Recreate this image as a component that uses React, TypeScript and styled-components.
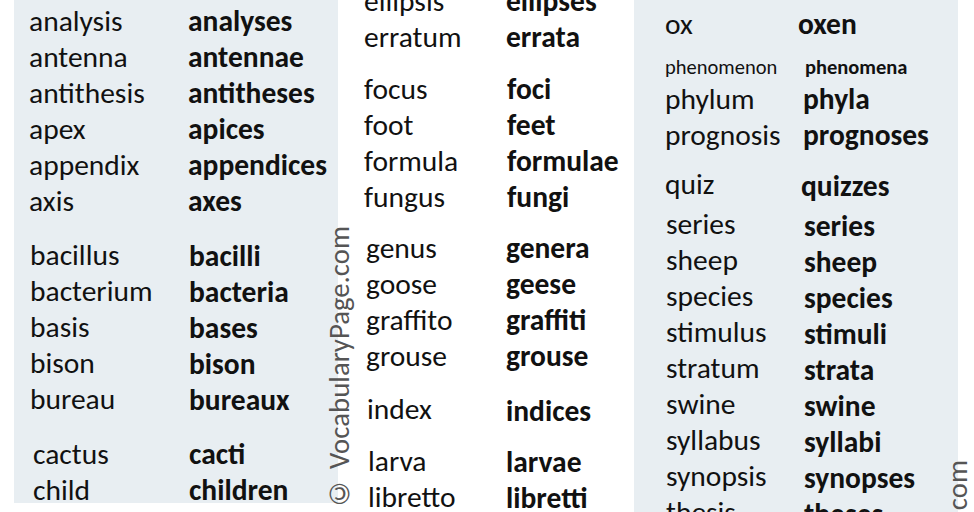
import styled, { createGlobalStyle } from "styled-components";

const GlobalStyle = createGlobalStyle`
    html, body {
        margin: 0;
        padding: 0;
        background: #ffffff;
    }
    body {
        font-family: Carlito, Calibri, Lato, "Liberation Sans", sans-serif;
        color: #111111;
    }
`

const Page = styled.div`
    position: relative;
    width: 974px;
    height: 512px;
    overflow: hidden;
    display: flex;
    background: #ffffff;
`

const Panel = styled.div<{ $width: number; $pad: number; $tint: boolean; $height: number }>`
    width: ${p => p.$width}px;
    height: ${p => p.$height}px;
    flex-shrink: 0;
    padding-left: ${p => p.$pad}px;
    box-sizing: border-box;
    background: ${p => (p.$tint ? "#e8eef2" : "#ffffff")};
    display: flex;
    flex-direction: column;
`

const Gutter = styled.div<{ $width: number }>`
    width: ${p => p.$width}px;
    flex-shrink: 0;
`

const Group = styled.div<{ $top: number; $indent: number }>`
    margin-top: ${p => p.$top}px;
    padding-left: ${p => p.$indent}px;
    display: flex;
    flex-direction: column;
`

const Row = styled.div<{ $col: number; $small: boolean }>`
    display: grid;
    grid-template-columns: ${p => p.$col}px auto;
    height: ${p => (p.$small ? 28 : 36)}px;
    line-height: ${p => (p.$small ? 28 : 36)}px;
    font-size: ${p => (p.$small ? 20.5 : 29.5)}px;
    white-space: nowrap;
`

const Singular = styled.span`
    font-weight: 400;
`

const Plural = styled.span<{ $shift: number; $drop: number }>`
    font-weight: 700;
    padding-left: ${p => p.$shift}px;
    padding-top: ${p => p.$drop}px;
`

const Watermark = styled.div<{ $left: number; $top: number }>`
    position: absolute;
    left: ${p => p.$left}px;
    top: ${p => p.$top}px;
    writing-mode: vertical-rl;
    transform: rotate(180deg);
    font-size: 28.8px;
    line-height: 30px;
    color: #555555;
    white-space: nowrap;
`

interface IGroup {
    top: number
    indent?: number
    shift?: number
    drop?: number
    small?: boolean
    rows: [string, string][]
}

interface IColumn {
    width: number
    pad: number
    col: number
    tint: boolean
    height: number
    groups: IGroup[]
}

const columns: IColumn[] = [
    {
        width: 324, pad: 15, col: 159, tint: true, height: 503,
        groups: [
            {
                top: 3, rows: [
                    ["analysis", "analyses"],
                    ["antenna", "antennae"],
                    ["antithesis", "antitheses"],
                    ["apex", "apices"],
                    ["appendix", "appendices"],
                    ["axis", "axes"],
                ]
            },
            {
                top: 18, indent: 1, shift: 1, drop: 1, rows: [
                    ["bacillus", "bacilli"],
                    ["bacterium", "bacteria"],
                    ["basis", "bases"],
                    ["bison", "bison"],
                    ["bureau", "bureaux"],
                ]
            },
            {
                top: 19, indent: 4, shift: 1, rows: [
                    ["cactus", "cacti"],
                    ["child", "children"],
                ]
            },
        ],
    },
    {
        width: 296, pad: 26, col: 142, tint: false, height: 512,
        groups: [
            {
                top: -17, rows: [
                    ["ellipsis", "ellipses"],
                    ["erratum", "errata"],
                ]
            },
            {
                top: 16, shift: 1, rows: [
                    ["focus", "foci"],
                    ["foot", "feet"],
                    ["formula", "formulae"],
                    ["fungus", "fungi"],
                ]
            },
            {
                top: 15, indent: 2, shift: -2, rows: [
                    ["genus", "genera"],
                    ["goose", "geese"],
                    ["graffito", "graffiti"],
                    ["grouse", "grouse"],
                ]
            },
            {
                top: 17, indent: 3, shift: -2, drop: 2, rows: [
                    ["index", "indices"],
                ]
            },
            {
                top: 16, indent: 4, shift: -3, drop: 1, rows: [
                    ["larva", "larvae"],
                    ["libretto", "libretti"],
                ]
            },
        ],
    },
    {
        width: 324, pad: 31, col: 133, tint: true, height: 512,
        groups: [
            {
                top: 6, rows: [
                    ["ox", "oxen"],
                ]
            },
            {
                top: 11, indent: -2, shift: 5, small: true, rows: [
                    ["phenomenon", "phenomena"],
                ]
            },
            {
                top: 0, indent: -1, shift: 4, rows: [
                    ["phylum", "phyla"],
                    ["prognosis", "prognoses"],
                ]
            },
            {
                top: 13, shift: 3, drop: 2, rows: [
                    ["quiz", "quizzes"],
                ]
            },
            {
                top: 4, indent: 1, shift: 6, drop: 2, rows: [
                    ["series", "series"],
                    ["sheep", "sheep"],
                    ["species", "species"],
                    ["stimulus", "stimuli"],
                    ["stratum", "strata"],
                    ["swine", "swine"],
                    ["syllabus", "syllabi"],
                    ["synopsis", "synopses"],
                    ["thesis", "theses"],
                ]
            },
        ],
    },
]

const WordColumn = ({ column }: { column: IColumn }) => (
    <Panel $width={column.width} $pad={column.pad} $tint={column.tint} $height={column.height}>
        {column.groups.map((group, gi) => (
            <Group key={gi} $top={group.top} $indent={group.indent ?? 0}>
                {group.rows.map(([one, many]) => (
                    <Row key={one} $col={column.col - (group.indent ?? 0)} $small={!!group.small}>
                        <Singular>{one}</Singular>
                        <Plural $shift={group.shift ?? 0} $drop={group.drop ?? 0}>{many}</Plural>
                    </Row>
                ))}
            </Group>
        ))}
    </Panel>
)

export default function App() {
    return (
        <>
            <GlobalStyle/>
            <Page>
                <Gutter $width={14}/>
                {columns.map((column, i) => (
                    <WordColumn key={i} column={column}/>
                ))}
                <Gutter $width={16}/>
                <Watermark $left={325} $top={226}>© VocabularyPage.com</Watermark>
                <Watermark $left={943} $top={460}>© VocabularyPage.com</Watermark>
            </Page>
        </>
    )
}
